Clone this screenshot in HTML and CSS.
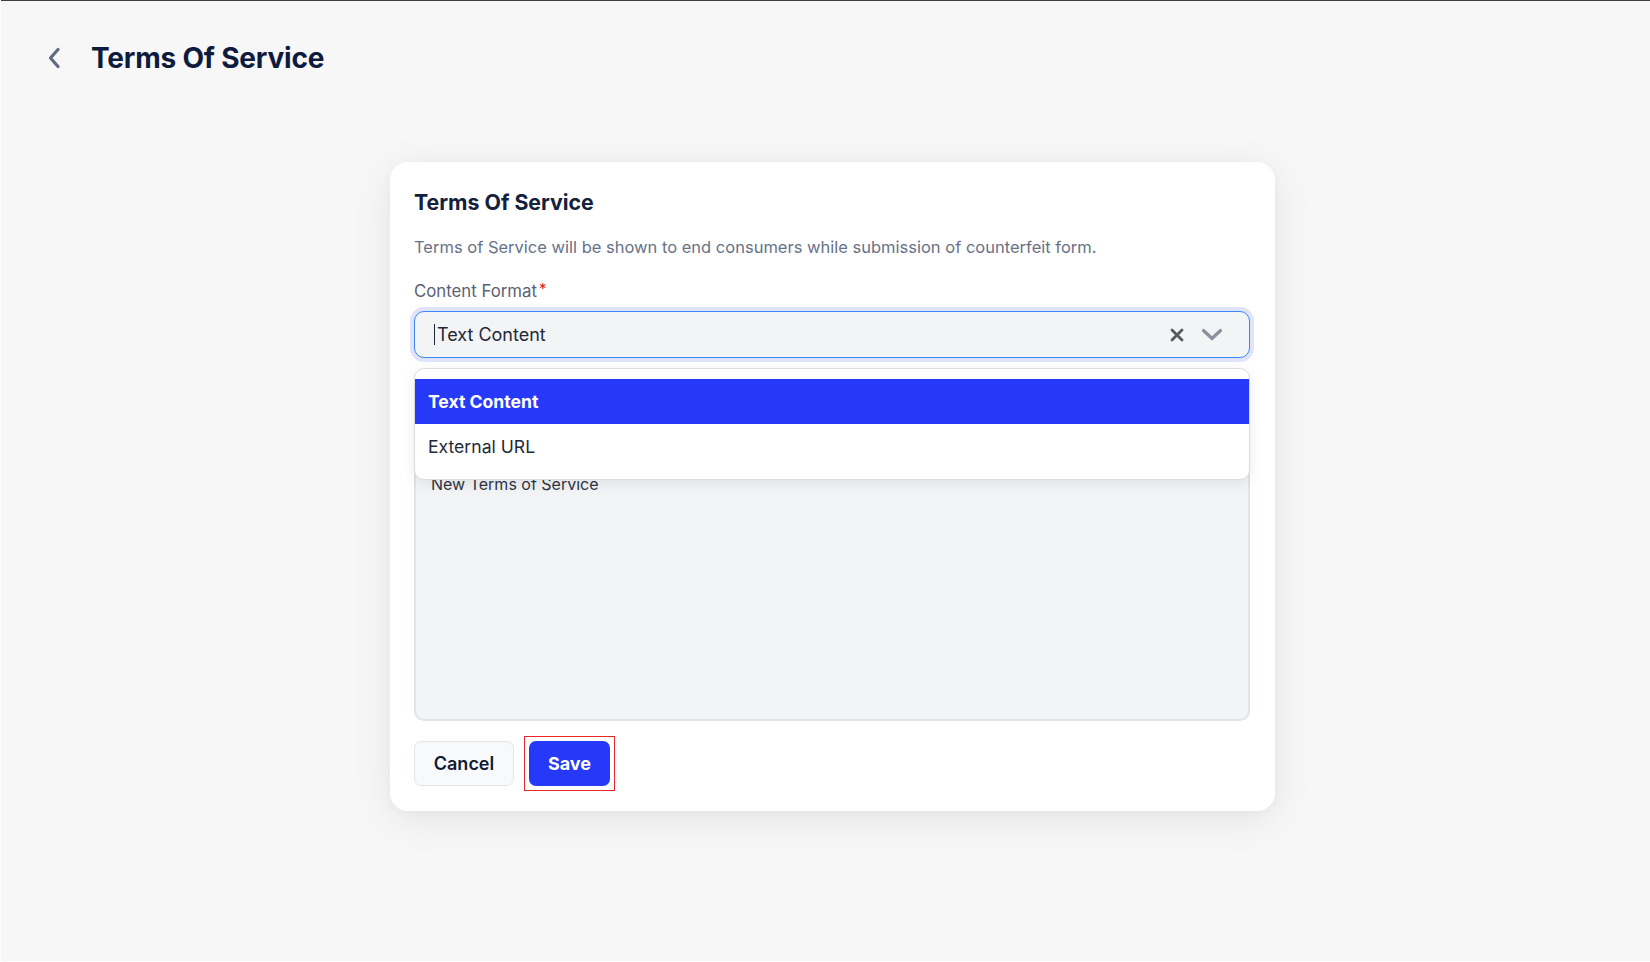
FILE: index.html
```html
<!DOCTYPE html>
<html lang="en">
<head>
<meta charset="utf-8">
<title>Terms Of Service</title>
<link rel="stylesheet" href="styles.css">
</head>
<body>
<div class="app">
  <header class="page-header">
    <button class="back-btn" aria-label="Back">
      <svg width="14" height="22" viewBox="0 0 14 22"><path d="M11 2.5 L3.5 11 L11 19.5" fill="none" stroke="#5f6b80" stroke-width="3.2" stroke-linecap="round" stroke-linejoin="round"/></svg>
    </button>
    <h1 class="page-title">Terms Of Service</h1>
  </header>
  <main class="main">
    <section class="card">
      <h2 class="card-title">Terms Of Service</h2>
      <p class="card-desc">Terms of Service will be shown to end consumers while submission of counterfeit form.</p>
      <div class="field">
        <label class="field-label">Content Format<span class="req">*</span></label>
        <div class="select-wrap">
          <div class="select">
            <span class="caret"></span>
            <span class="select-value">Text Content</span>
            <span class="select-icons">
              <svg class="clear-icon" width="14" height="14" viewBox="0 0 14 14"><path d="M2 2 L12 12 M12 2 L2 12" stroke="#555a60" stroke-width="2.8" stroke-linecap="round"/></svg>
              <svg class="chev-icon" width="22" height="14" viewBox="0 0 22 14"><path d="M2.5 2.5 L11 10.5 L19.5 2.5" fill="none" stroke="#8b919d" stroke-width="3.2" stroke-linecap="round" stroke-linejoin="round"/></svg>
            </span>
          </div>
          <ul class="menu">
            <li class="option active">Text Content</li>
            <li class="option">External URL</li>
          </ul>
        </div>
      </div>
      <div class="textarea">New Terms of Service</div>
      <div class="actions">
        <button class="btn btn-cancel">Cancel</button>
        <span class="focus-box"><button class="btn btn-save">Save</button></span>
      </div>
    </section>
  </main>
</div>
</body>
</html>
```
FILE: styles.css
```css
* { box-sizing: border-box; }
html, body { margin: 0; padding: 0; background: #ffffff; }
body { font-family: "Inter", "Noto Sans", "Liberation Sans", sans-serif; color: #1f2937; }

.app {
  margin-left: 1px;
  height: 961px;
  background: #f7f7f7;
  border-top: 1px solid #3b3f46;
}

.page-header {
  display: flex;
  align-items: center;
  padding: 38px 0 0 46px;
  height: 76px;
}
.back-btn {
  border: 0;
  background: none;
  padding: 0;
  width: 16px;
  height: 22px;
  display: flex;
  align-items: center;
  margin-right: 28px;
  cursor: pointer;
}
.page-title {
  margin: 0;
  font-size: 28px;
  line-height: 36px;
  font-weight: 700;
  color: #0f1b3d;
  letter-spacing: -0.2px;
}

.main {
  display: flex;
  justify-content: center;
  padding: 85px 0 0 14px;
}
.card {
  width: 885px;
  background: #ffffff;
  border-radius: 18px;
  box-shadow: 0 8px 40px rgba(0, 0, 0, 0.08), 0 2px 10px rgba(0, 0, 0, 0.03);
  padding: 25px 25px 25px 24px;
}
.card-title {
  margin: 0;
  font-size: 21.3px;
  line-height: 30px;
  font-weight: 700;
  color: #14213d;
}
.card-desc {
  margin: 18px 0 0;
  font-size: 16.5px;
  line-height: 24px;
  color: #687287;
}
.field { margin-top: 21px; }
.field-label {
  display: block;
  font-size: 16.8px;
  line-height: 22px;
  color: #596274;
  margin-bottom: 8px;
}
.req { color: #e11d1d; margin-left: 2px; position: relative; top: -3px; font-size: 15px; }

.select-wrap { position: relative; }
.select {
  height: 47px;
  display: flex;
  align-items: center;
  background: #f3f4f6;
  border: 1px solid #3a87f6;
  border-radius: 10px;
  box-shadow: 0 0 0 4px #e0e4fb;
  padding: 0 26px 0 19px;
}
.caret {
  width: 1px;
  height: 21px;
  background: #1f2937;
  margin-right: 2px;
}
.select-value {
  flex: 1;
  font-size: 18px;
  color: #1f2937;
}
.select-icons {
  display: flex;
  align-items: center;
  gap: 17px;
}

.menu {
  position: absolute;
  left: 0;
  right: 0;
  top: 57px;
  margin: 0;
  padding: 10px 0;
  list-style: none;
  background: #ffffff;
  border: 1px solid #dcdcdf;
  border-radius: 10px;
  box-shadow: 0 4px 14px rgba(0, 0, 0, 0.08);
  z-index: 5;
}
.option {
  height: 45px;
  display: flex;
  align-items: center;
  padding-left: 13px;
  font-size: 17.6px;
  color: #1f2937;
}
.option.active {
  background: #2639f8;
  color: #ffffff;
  font-weight: 700;
}

.textarea {
  margin-top: 101px;
  height: 262px;
  background: #f3f4f6;
  border: 2px solid #e1e3e8;
  border-radius: 10px;
  padding: 12px 15px;
  font-size: 16px;
  line-height: 22px;
  color: #2d3646;
}

.actions {
  display: flex;
  align-items: flex-start;
  gap: 10px;
  margin-top: 20px;
  height: 45px;
}
.btn {
  height: 45px;
  border-radius: 7px;
  font-family: inherit;
  font-size: 18px;
  font-weight: 600;
  cursor: pointer;
}
.btn-cancel {
  width: 100px;
  background: #f8f9fa;
  border: 1px solid #e3e5e9;
  color: #111a33;
}
.focus-box {
  display: inline-flex;
  padding: 4px;
  margin-top: -5.5px;
  border: 1.5px solid #e8262c;
}
.btn-save {
  width: 81px;
  background: #2639f8;
  border: 0;
  color: #ffffff;
  font-weight: 700;
}
```
